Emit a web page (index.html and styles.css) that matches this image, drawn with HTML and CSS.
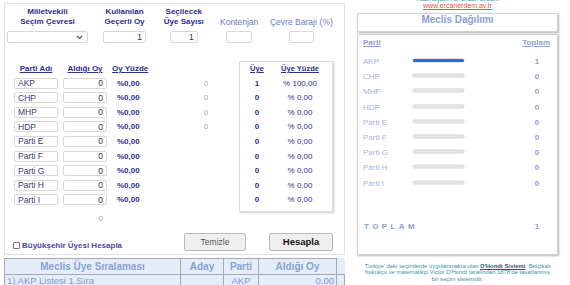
FILE: index.html
```html
<!DOCTYPE html>
<html lang="tr">
  <head>
    <meta charset="UTF-8" />
    <meta name="viewport" content="width=device-width, initial-scale=1.0" />
    <title>D'Hondt Hesaplama</title>
    <link rel="stylesheet" href="styles.css">
  </head>
  <body>
    <div class="page">
      <div class="left">
        <div class="calc">
          <div class="top">
            <div class="field f1">
              <div class="lbl">Milletvekili<br />Seçim Çevresi</div>
              <div class="select">
                <svg width="7" height="5" viewBox="0 0 7 5"><path d="M1 1l2.5 2.5L6 1" fill="none" stroke="#555" stroke-width="1.1" /></svg>
              </div>
            </div>
            <div class="field f2">
              <div class="lbl">Kullanılan<br />Geçerli Oy</div>
              <input class="num w43" type="text" value="1" />
            </div>
            <div class="field f3">
              <div class="lbl">Seçilecek<br />Üye Sayısı</div>
              <input class="num w28" type="text" value="1" />
            </div>
            <div class="field f4">
              <div class="lbl light">Kontenjan</div>
              <input class="num w26" type="text" value="" />
            </div>
            <div class="field f5">
              <div class="lbl light">Çevre Barajı (%)</div>
              <input class="num w25" type="text" value="" />
            </div>
          </div>

          <div class="parties">
            <div class="ptable">
              <div class="ph">Parti Adı</div>
              <div class="ph">Aldığı Oy</div>
              <div class="ph pl">Oy Yüzde</div>
              <div></div>

              <input class="name" type="text" value="AKP" /><input class="num" type="text" value="0" /><div class="pct">%0,00</div><div class="grey">0</div>
              <input class="name" type="text" value="CHP" /><input class="num" type="text" value="0" /><div class="pct">%0,00</div><div class="grey">0</div>
              <input class="name" type="text" value="MHP" /><input class="num" type="text" value="0" /><div class="pct">%0,00</div><div class="grey">0</div>
              <input class="name" type="text" value="HDP" /><input class="num" type="text" value="0" /><div class="pct">%0,00</div><div class="grey">0</div>
              <input class="name" type="text" value="Parti E" /><input class="num" type="text" value="0" /><div class="pct">%0,00</div><div></div>
              <input class="name" type="text" value="Parti F" /><input class="num" type="text" value="0" /><div class="pct">%0,00</div><div></div>
              <input class="name" type="text" value="Parti G" /><input class="num" type="text" value="0" /><div class="pct">%0,00</div><div></div>
              <input class="name" type="text" value="Parti H" /><input class="num" type="text" value="0" /><div class="pct">%0,00</div><div></div>
              <input class="name" type="text" value="Parti I" /><input class="num" type="text" value="0" /><div class="pct">%0,00</div><div></div>

              <div></div>
              <div class="sum">0</div>
            </div>

            <div class="seats">
              <div class="sh">Üye</div><div class="sh">Üye Yüzde</div>
              <div class="sn">1</div><div class="sp">% 100,00</div>
              <div class="sn">0</div><div class="sp">% 0,00</div>
              <div class="sn">0</div><div class="sp">% 0,00</div>
              <div class="sn">0</div><div class="sp">% 0,00</div>
              <div class="sn">0</div><div class="sp">% 0,00</div>
              <div class="sn">0</div><div class="sp">% 0,00</div>
              <div class="sn">0</div><div class="sp">% 0,00</div>
              <div class="sn">0</div><div class="sp">% 0,00</div>
              <div class="sn">0</div><div class="sp">% 0,00</div>
            </div>
          </div>

          <div class="actions">
            <label class="check"><input type="checkbox" /> Büyükşehir Üyesi Hesapla</label>
            <div class="buttons">
              <button class="btn clear" type="button">Temizle</button>
              <button class="btn calc-btn" type="button">Hesapla</button>
            </div>
          </div>
        </div>

        <table class="ranking">
          <tr>
            <th class="c1">Meclis Üye Sıralaması</th>
            <th class="c2">Aday</th>
            <th class="c3">Parti</th>
            <th class="c4">Aldığı Oy</th>
            <th class="c5"></th>
          </tr>
          <tr>
            <td>1) AKP Listesi 1.Sıra</td>
            <td></td>
            <td class="mid">AKP</td>
            <td class="right">0.00</td>
            <td></td>
          </tr>
        </table>
      </div>

      <div class="side">
        <div class="author">Hazırlayan: Av. Ercan Erdem</div>
        <a class="site" href="#">www.ercanerdem.av.tr</a>
        <div class="box title">Meclis Dağılımı</div>
        <div class="box dist">
          <div class="dh"><span>Parti</span><span>Toplam</span></div>
          <div class="rows">
            <div class="pn">AKP</div><div class="track"><div class="fill" style="width: 100%"></div></div><div class="pv">1</div>
            <div class="pn">CHP</div><div class="track"></div><div class="pv">0</div>
            <div class="pn">MHP</div><div class="track"></div><div class="pv">0</div>
            <div class="pn">HDP</div><div class="track"></div><div class="pv">0</div>
            <div class="pn">Parti E</div><div class="track"></div><div class="pv">0</div>
            <div class="pn">Parti F</div><div class="track"></div><div class="pv">0</div>
            <div class="pn">Parti G</div><div class="track"></div><div class="pv">0</div>
            <div class="pn">Parti H</div><div class="track"></div><div class="pv">0</div>
            <div class="pn">Parti I</div><div class="track"></div><div class="pv">0</div>
          </div>
          <div class="total"><span class="tl">TOPLAM</span><span class="pv">1</span></div>
        </div>
        <p class="note">
          Türkiye' deki seçimlerde uygulanmakta olan <b>D'Hondt Sistemi</b>. Belçikalı<br />
          hukukçu ve matematikçi Victor D'Hondt tarafından 1878'de tasarlanmış<br />
          bir seçim sistemidir.
        </p>
      </div>
    </div>
  </body>
</html>
```

FILE: styles.css
```css
* {
  margin: 0;
  padding: 0;
  box-sizing: border-box;
  font-family: "Liberation Sans", Arial, sans-serif;
}
html,
body {
  overflow: hidden;
  background: #fff;
}
.page {
  display: flex;
  padding: 3px 0 0 4px;
}
.left {
  width: 341px;
}

/* calculator box */
.calc {
  border: 1px solid #e0e0e0;
  padding: 3px 11px 3px 0;
}
.top {
  display: flex;
}
.field {
  display: flex;
  flex-direction: column;
  align-items: center;
}
.f1 { width: 86px; }
.f2 { width: 70px; }
.f3 { width: 50px; }
.f4 { width: 62px; }
.f5 { width: 64px; }
.lbl {
  height: 20px;
  line-height: 10px;
  font-size: 8px;
  font-weight: bold;
  color: #2b2f8e;
  text-align: center;
  display: flex;
  align-items: flex-end;
  margin-bottom: 4px;
}
.lbl.light {
  font-weight: normal;
  font-size: 8.5px;
  color: #6b7bd0;
}
.select {
  width: 81px;
  height: 12px;
  border: 1px solid #d6d6d6;
  border-radius: 2px;
  display: flex;
  justify-content: flex-end;
  align-items: center;
  padding-right: 4px;
}
input {
  height: 11px;
  border: 1px solid #d8d8d8;
  border-radius: 2px;
  outline: none;
  background: #fff;
  font-size: 8.5px;
  color: #333;
  padding: 0 3px;
}
.num {
  text-align: right;
}
.w43 { width: 43px; height: 12px; }
.w28 { width: 28px; height: 12px; }
.w26 { width: 26px; height: 12px; }
.w25 { width: 25px; height: 12px; }
.name {
  color: #3a3a72;
}

/* party rows */
.parties {
  display: flex;
  align-items: flex-start;
  margin-top: 18px;
  padding-left: 9px;
}
.ptable {
  display: grid;
  grid-template-columns: 44px 44px 56px 66px;
  column-gap: 5px;
  grid-template-rows: 10px;
  grid-auto-rows: 11px;
  row-gap: 3.6px;
  margin-top: 3px;
}
.ph {
  font-size: 8px;
  line-height: 10px;
  font-weight: bold;
  color: #2b2f8e;
  text-decoration: underline;
  text-align: center;
}
.ph.pl {
  text-align: left;
}
.pct {
  font-size: 8px;
  line-height: 11px;
  font-weight: bold;
  color: #2b2f8e;
  padding-left: 5px;
}
.grey {
  font-size: 7.5px;
  line-height: 11px;
  color: #a8a8a8;
  text-align: center;
}
.sum {
  font-size: 7.5px;
  line-height: 11px;
  color: #a8a8a8;
  text-align: right;
  padding-right: 4px;
  margin-top: 4px;
}
.seats {
  width: 95px;
  border: 1px solid #dcdcdc;
  box-shadow: 1px 1px 2px rgba(0, 0, 0, 0.2);
  display: grid;
  grid-template-columns: 34px 52px;
  grid-template-rows: 10px;
  grid-auto-rows: 11px;
  row-gap: 3.6px;
  padding: 2px 0 6px;
}
.sh {
  font-size: 7.5px;
  line-height: 10px;
  font-weight: bold;
  color: #2b2f8e;
  text-decoration: underline;
  text-align: center;
}
.sn,
.sp {
  font-size: 8px;
  line-height: 11px;
  color: #2b2f8e;
  text-align: center;
}
.sn {
  font-weight: bold;
}

/* buttons */
.actions {
  display: flex;
  align-items: flex-end;
  margin-top: 13px;
  padding-left: 8px;
}
.check {
  display: flex;
  align-items: center;
  gap: 2px;
  font-size: 8px;
  line-height: 10px;
  font-weight: bold;
  color: #4b4aa8;
}
.check input {
  appearance: none;
  width: 7px;
  height: 7px;
  border: 1px solid #777;
  border-radius: 1px;
  padding: 0;
}
.buttons {
  display: flex;
  gap: 23px;
  margin-left: auto;
}
.btn {
  height: 18px;
  border: 1px solid #b9b9b9;
  border-radius: 2px;
  background: #efefef;
}
.clear {
  width: 62px;
  font-size: 8.5px;
  color: #555;
}
.calc-btn {
  width: 64px;
  font-size: 9.5px;
  font-weight: bold;
  color: #111;
}

/* ranking table */
.ranking {
  margin-top: 3px;
  width: 341px;
  border-collapse: collapse;
  background: #e5edf9;
}
.ranking th,
.ranking td {
  border: 1px solid #a3aab5;
  height: 16px;
  padding: 0 2px;
}
.ranking th {
  font-size: 10px;
  font-weight: bold;
  color: #8aa1d6;
}
.ranking td {
  font-size: 9.5px;
  color: #7d98d8;
  vertical-align: top;
  line-height: 11px;
}
.ranking .c1 { width: 176px; }
.ranking .c2 { width: 43px; }
.ranking .c3 { width: 35px; }
.ranking .c4 { width: 78px; }
.ranking .c5 { border: none; }
.ranking .mid { text-align: center; }
.ranking .right { text-align: right; }

/* right column */
.side {
  width: 201px;
  margin-left: 12px;
  text-align: center;
}
.author {
  font-size: 6.5px;
  line-height: 7px;
  margin-top: -8px;
  color: #3b93a3;
}
.site {
  display: block;
  font-size: 7px;
  line-height: 8px;
  color: #e4524f;
  text-decoration: underline;
}
.box {
  border: 1px solid #d2d2d2;
  box-shadow: 1px 1px 2px rgba(0, 0, 0, 0.3);
}
.title {
  margin-top: 3px;
  height: 19px;
  font-size: 10px;
  line-height: 12px;
  font-weight: bold;
  color: #8ba0d2;
}
.dist {
  margin-top: 2px;
  height: 221px;
  padding: 3px 7px 0 5px;
  text-align: left;
}
.dh {
  display: flex;
  justify-content: space-between;
  font-size: 8px;
  line-height: 10px;
  font-weight: bold;
  color: #8da2d6;
  text-decoration: underline;
}
.rows {
  display: grid;
  grid-template-columns: 50px 51px 1fr;
  grid-auto-rows: 15.2px;
  align-items: center;
  margin-top: 6px;
}
.pn {
  font-size: 8px;
  color: #a6b3dc;
}
.track {
  height: 3px;
  border-radius: 2px;
  background: #e2e2e2;
  box-shadow: 0 0 0 0.5px #cfcfcf;
  margin-top: -2px;
}
.fill {
  height: 3px;
  border-radius: 2px;
  background: #1f6fe0;
}
.pv {
  font-size: 8px;
  font-weight: bold;
  color: #8ca0d4;
  justify-self: end;
  width: 26px;
  text-align: center;
}
.total {
  display: flex;
  justify-content: space-between;
  align-items: center;
  margin-top: 28px;
  height: 15px;
}
.tl {
  font-size: 8px;
  font-weight: bold;
  letter-spacing: 3.4px;
  color: #8ca0d4;
  padding-left: 1px;
}
.note {
  margin-top: 8px;
  font-size: 5.9px;
  line-height: 6.4px;
  color: #3b93a3;
  white-space: nowrap;
}
.note b {
  color: #1f5b73;
  text-decoration: underline;
}
```
